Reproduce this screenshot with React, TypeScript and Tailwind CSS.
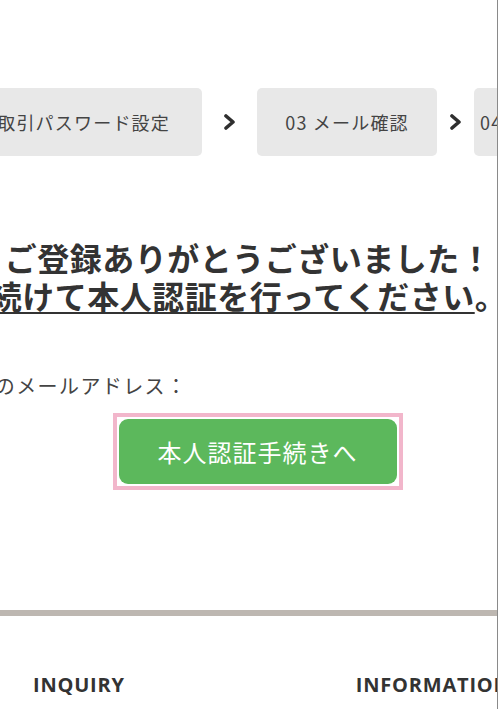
import { ReactNode } from "react";

const jp = { fontFamily: '"Noto Sans CJK JP", "Noto Sans", sans-serif' };

function Chevron() {
  return (
    <svg width="13" height="16" viewBox="0 0 13 16" fill="none">
      <polyline points="3,2 10,8 3,14" stroke="#2f2f2f" strokeWidth="3.6" strokeLinecap="round" strokeLinejoin="round" />
    </svg>
  );
}

function Step({ children, className }: { children: ReactNode; className: string }) {
  return (
    <div className={`flex h-[68px] shrink-0 items-center whitespace-nowrap rounded-[5px] bg-[#e8e8e8] text-[18px] tracking-[1.2px] text-[#444] ${className}`}>
      {children}
    </div>
  );
}

function App() {
  return (
    <div className="h-[709px] w-[499px] overflow-hidden bg-white" style={jp}>
      <div className="w-[498px] overflow-hidden border-r border-[#8a8a8a]">
        {/* steps */}
        <div className="flex items-center pt-[88px] ml-[-30px]">
          <Step className="w-[232px] justify-end pr-[32px]">02 取引パスワード設定</Step>
          <div className="flex w-[55px] shrink-0 justify-center">
            <Chevron />
          </div>
          <Step className="w-[180px] justify-center">03 メール確認</Step>
          <div className="flex w-[37px] shrink-0 justify-center">
            <Chevron />
          </div>
          <Step className="w-[180px] justify-start pl-[6px]">04 本人認証</Step>
        </div>

        {/* message */}
        <div className="mt-[82px] flex flex-col items-center text-[32px] font-bold leading-[38px] tracking-[0.5px] text-[#333]">
          <p className="whitespace-nowrap">ご登録ありがとうございました！</p>
          <p className="whitespace-nowrap">
            <span className="underline decoration-2 underline-offset-[3px]">続けて本人認証を行ってください</span>。
          </p>
        </div>

        <div className="mt-[59px] ml-[-48px] whitespace-nowrap text-[20px] leading-[26px] tracking-[1.4px] text-[#444]">
          登録のメールアドレス：
        </div>

        <div className="mt-[14px] flex justify-center pl-[18px]">
          <div className="border-[4px] border-[#f2b6cb] bg-white p-[2px]">
            <button className="flex h-[65px] w-[278px] items-center justify-center rounded-[9px] bg-[#5cb85c] text-[24px] tracking-[1px] text-white">
              本人認証手続きへ
            </button>
          </div>
        </div>

        <div className="mt-[120px] h-[6px] bg-[#bdb7b1]" />

        {/* footer */}
        <footer
          className="flex pt-[54px] text-[20px] font-bold tracking-[0.8px] text-[#333]"
          style={{ fontFamily: '"Open Sans", "Noto Sans", sans-serif' }}
        >
          <span className="ml-[33px]">INQUIRY</span>
          <span className="ml-[231px] whitespace-nowrap">INFORMATION</span>
        </footer>
        <div className="h-[40px]" />
      </div>
    </div>
  );
}

export default App;
